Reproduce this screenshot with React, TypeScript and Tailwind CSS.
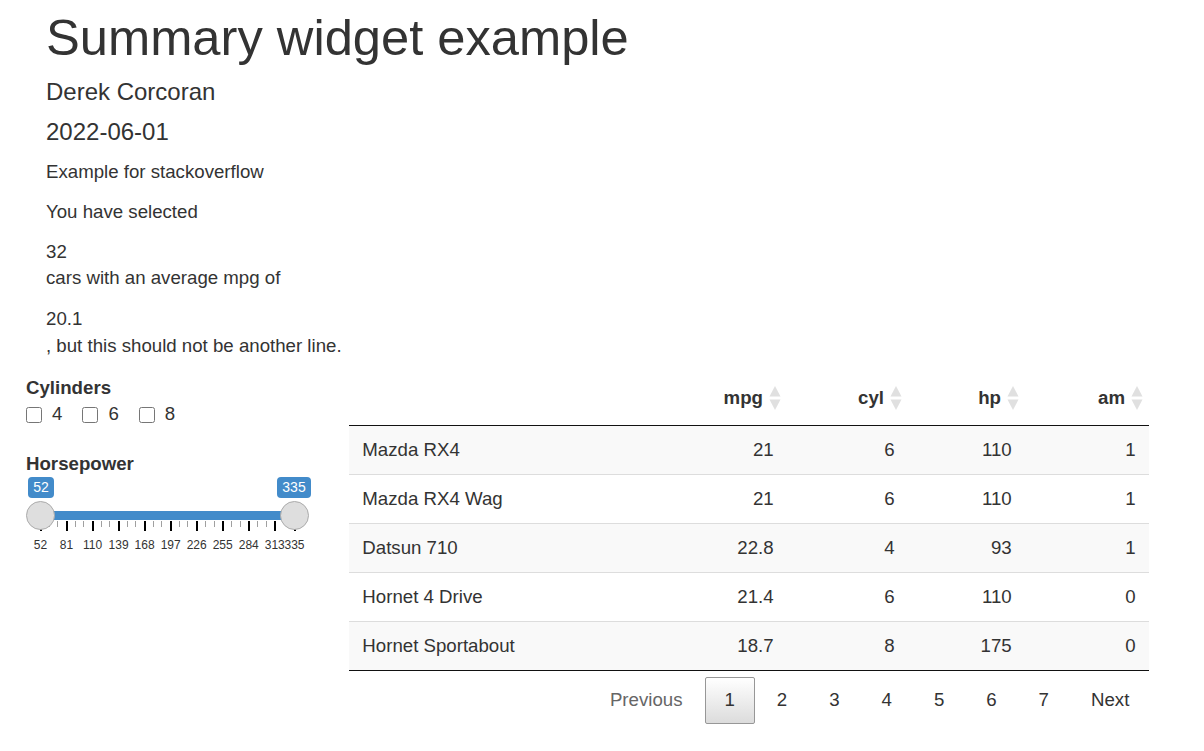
import React from 'react';

type Car = { name: string; mpg: string; cyl: number; hp: number; am: number };

const cars: Car[] = [
  { name: 'Mazda RX4', mpg: '21', cyl: 6, hp: 110, am: 1 },
  { name: 'Mazda RX4 Wag', mpg: '21', cyl: 6, hp: 110, am: 1 },
  { name: 'Datsun 710', mpg: '22.8', cyl: 4, hp: 93, am: 1 },
  { name: 'Hornet 4 Drive', mpg: '21.4', cyl: 6, hp: 110, am: 0 },
  { name: 'Hornet Sportabout', mpg: '18.7', cyl: 8, hp: 175, am: 0 },
];

const gridCols = 'grid grid-cols-[318px_120px_121px_117px_124px]';

// slider geometry, px relative to the slider box
const MIN = 52;
const MAX = 335;
const X0 = 14.5;
const W = 254;
const pos = (v: number) => X0 + ((v - MIN) / (MAX - MIN)) * W;
const majors = [52, 81, 110, 139, 168, 197, 226, 255, 284, 313, 335];

function SortIcon() {
  return (
    <svg width="12" height="25" viewBox="0 0 12 25" className="absolute right-[6px] top-1/2 -translate-y-1/2">
      <polygon points="6,0.5 11.5,11 0.5,11" fill="#e0e0e0" />
      <polygon points="0.5,14 11.5,14 6,24.5" fill="#e0e0e0" />
    </svg>
  );
}

function HeaderCell({ label }: { label: string }) {
  return (
    <div className="relative py-[13.33px] pl-[13.33px] pr-[24px] text-right font-bold">
      {label}
      <SortIcon />
    </div>
  );
}

function RangeSlider() {
  const minors: number[] = [];
  for (let i = 0; i < majors.length - 2; i++) {
    const a = majors[i];
    const b = majors[i + 1];
    minors.push(a + (b - a) / 3, a + ((b - a) * 2) / 3);
  }
  return (
    <div className="relative h-[80px] w-[300px]">
      <div className="absolute left-[14.5px] top-[34px] h-[9px] w-[254px] bg-[#428bca]" />
      {minors.map((v) => (
        <div
          key={`m${v}`}
          className="absolute top-[44px] h-[6px] w-px bg-[#a0a0a0]"
          style={{ left: pos(v) - 0.5 }}
        />
      ))}
      {majors.map((v) => (
        <React.Fragment key={v}>
          <div className="absolute top-[44px] h-[10px] w-[2px] bg-black" style={{ left: pos(v) - 1 }} />
          <div
            className="absolute top-[61px] w-[40px] text-center text-[12px] leading-[14px] text-[#333]"
            style={{ left: pos(v) - 20 }}
          >
            {v}
          </div>
        </React.Fragment>
      ))}
      <div className="absolute left-0 top-[23.5px] h-[29px] w-[29px] rounded-full border border-[#ababab] bg-[#dedede]" />
      <div className="absolute left-[254px] top-[23.5px] h-[29px] w-[29px] rounded-full border border-[#ababab] bg-[#dedede]" />
      <div className="absolute left-[2px] top-0 flex h-[21px] w-[26px] items-center justify-center rounded-[4px] bg-[#428bca] text-[14px] text-white">
        52
      </div>
      <div className="absolute left-[251px] top-0 flex h-[21px] w-[34px] items-center justify-center rounded-[4px] bg-[#428bca] text-[14px] text-white">
        335
      </div>
    </div>
  );
}

export default function App() {
  return (
    <div className="min-h-[751px] w-[1204px] bg-white font-['Liberation_Sans',Arial,sans-serif] text-[18.67px] leading-[26.67px] text-[#333]">
      <div className="pl-[46px] pt-[10px]">
        <h1 className="text-[50.67px] leading-[56px] font-normal">Summary widget example</h1>
        <h4 className="mt-[13px] text-[24px] leading-[26.4px] font-normal">Derek Corcoran</h4>
        <h4 className="mt-[13.6px] text-[24px] leading-[26.4px] font-normal">2022-06-01</h4>
        <p className="mt-[13.1px] mb-[13.33px]">Example for stackoverflow</p>
        <p className="mb-[13.33px]">You have selected</p>
        <div>32</div>
        <p className="mb-[14.5px]">cars with an average mpg of</p>
        <div>20.1</div>
        <p>, but this should not be another line.</p>
      </div>

      <div className="mt-[12px] flex pl-[26px]">
        <div className="w-[323px] pt-[3px]">
          <div className="font-bold">Cylinders</div>
          <div className="flex gap-[20px]">
            {['4', '6', '8'].map((c) => (
              <label key={c} className="flex items-center gap-[10px]">
                <input type="checkbox" className="m-0 h-[16px] w-[16px]" />
                <span>{c}</span>
              </label>
            ))}
          </div>
          <div className="mt-[22.5px] font-bold">Horsepower</div>
          <RangeSlider />
        </div>

        <div className="w-[800px]">
          <div className={`${gridCols} border-b border-[#111]`}>
            <div />
            <HeaderCell label="mpg" />
            <HeaderCell label="cyl" />
            <HeaderCell label="hp" />
            <HeaderCell label="am" />
          </div>
          {cars.map((car, i) => (
            <div
              key={car.name}
              className={`${gridCols} ${i > 0 ? 'border-t border-[#ddd]' : ''} ${i % 2 === 0 ? 'bg-[#f9f9f9]' : 'bg-white'}`}
            >
              <div className="px-[13.33px] py-[10.67px]">{car.name}</div>
              <div className="px-[13.33px] py-[10.67px] text-right">{car.mpg}</div>
              <div className="px-[13.33px] py-[10.67px] text-right">{car.cyl}</div>
              <div className="px-[13.33px] py-[10.67px] text-right">{car.hp}</div>
              <div className="px-[13.33px] py-[10.67px] text-right">{car.am}</div>
            </div>
          ))}
          <div className="border-t border-[#111]" />

          <div className="mt-[5.67px] flex justify-end gap-[2.67px]">
            <span className="border border-transparent px-[18.67px] py-[9.33px] text-[#666]">Previous</span>
            <span className="min-w-[28px] rounded-[2px] border border-[#979797] bg-gradient-to-b from-white to-[#dcdcdc] px-[18.67px] py-[9.33px] text-center">
              1
            </span>
            {['2', '3', '4', '5', '6', '7'].map((n) => (
              <span key={n} className="min-w-[28px] border border-transparent px-[18.67px] py-[9.33px] text-center">
                {n}
              </span>
            ))}
            <span className="border border-transparent px-[18.67px] py-[9.33px]">Next</span>
          </div>
        </div>
      </div>
    </div>
  );
}
